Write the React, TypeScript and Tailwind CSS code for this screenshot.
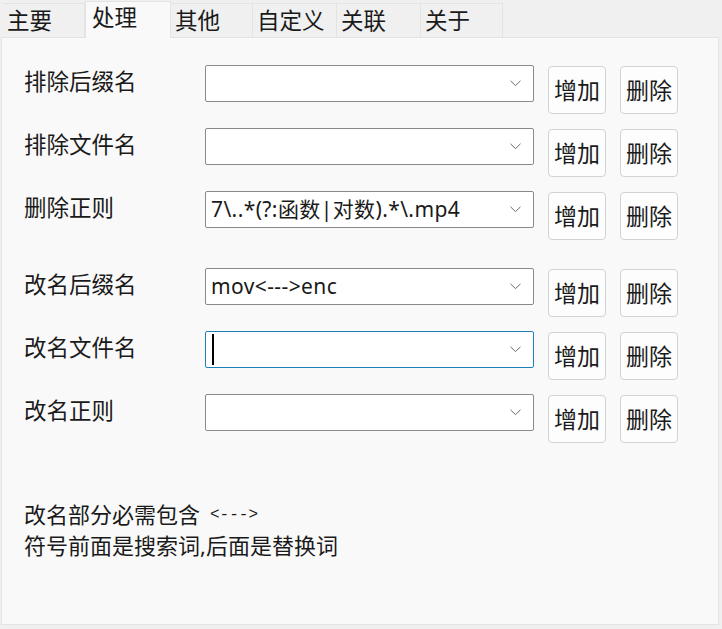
import React from 'react';

// --- Data ---

interface RowData {
    label: string;
    value: string;
    focused?: boolean;
}

const tabs = [
    { name: '主要', w: 'w-[82px]' },
    { name: '处理', w: 'w-[86px]', active: true },
    { name: '其他', w: 'w-[82px]' },
    { name: '自定义', w: 'w-[84px]' },
    { name: '关联', w: 'w-[84px]' },
    { name: '关于', w: 'w-[82px]' },
];

const groupA: RowData[] = [
    { label: '排除后缀名', value: '' },
    { label: '排除文件名', value: '' },
    { label: '删除正则', value: '7\\..*(?:函数|对数).*\\.mp4' },
];

const groupB: RowData[] = [
    { label: '改名后缀名', value: 'mov<--->enc' },
    { label: '改名文件名', value: '', focused: true },
    { label: '改名正则', value: '' },
];

const font = { fontFamily: '"Noto Sans", "Noto Sans CJK SC", sans-serif' };

// --- Pieces ---

const Chevron = () => (
    <svg width="11" height="7" viewBox="0 0 11 7" className="shrink-0">
        <polyline points="0.5,0.8 5.5,5.6 10.5,0.8" fill="none" stroke="#6b6b6b" strokeWidth="1" />
    </svg>
);

const Combo = ({ value, focused }: { value: string; focused?: boolean }) => (
    <div
        className={
            'flex h-[37px] w-[329px] items-center rounded-[2px] border bg-white pl-[5px] pr-[12px] ' +
            (focused ? 'border-[#1f7fb8]' : 'border-[#8a8a8a]')
        }
    >
        <div className="flex flex-1 items-center text-[21px] leading-none tracking-[0.4px] text-[#1a1a1a]">
            {focused && <span className="ml-[1px] h-[31px] w-[1.5px] bg-black" />}
            {value}
        </div>
        <Chevron />
    </div>
);

const Btn = ({ text }: { text: string }) => (
    <button className="mt-[1px] flex h-[48px] w-[58px] items-center justify-center rounded-[4px] border border-[#d3d3d3] bg-[#fdfdfd] text-[23px] text-[#1a1a1a]">
        {text}
    </button>
);

const Row = ({ row }: { row: RowData }) => (
    <div className="flex items-start">
        <div className="w-[181px] text-[22.5px] leading-[33px] text-[#1a1a1a]">{row.label}</div>
        <Combo value={row.value} focused={row.focused} />
        <div className="ml-[14px] flex gap-[14px]">
            <Btn text="增加" />
            <Btn text="删除" />
        </div>
    </div>
);

// --- Main ---

export default function App() {
    return (
        <div className="flex h-[629px] w-[722px] flex-col bg-[#f0f0f0]" style={font}>
            <div className="flex h-[37px] items-end pl-[3px]">
                {tabs.map((t) =>
                    t.active ? (
                        <div
                            key={t.name}
                            className={'relative z-10 -mb-px h-[37px] border-x border-t border-[#e3e3e3] bg-[#f9f9f9] pl-[6px] pt-[1px] text-[22.5px] leading-[30px] text-[#1a1a1a] ' + t.w}
                        >
                            {t.name}
                        </div>
                    ) : (
                        <div
                            key={t.name}
                            className={'h-[34px] border-r border-t border-[#e3e3e3] bg-[#f0f0f0] pl-[4px] pt-[2px] text-[22.5px] leading-[30px] text-[#1a1a1a] ' + t.w}
                        >
                            {t.name}
                        </div>
                    )
                )}
            </div>
            <div className="ml-[1px] mr-[3px] h-[588px] border border-[#e3e3e3] bg-[#f9f9f9] pl-[22px] pt-[27px]">
                <div className="flex flex-col gap-[14px]">
                    {groupA.map((r) => (
                        <Row key={r.label} row={r} />
                    ))}
                </div>
                <div className="mt-[28px] flex flex-col gap-[14px]">
                    {groupB.map((r) => (
                        <Row key={r.label} row={r} />
                    ))}
                </div>
                <div className="mt-[56px] text-[22px] text-[#1a1a1a]">
                    <div className="flex h-[31px] items-center leading-[31px]">
                        改名部分必需包含
                        <span className="ml-[10px] text-[16px] leading-none" style={{ fontFamily: '"Liberation Mono", monospace' }}>
                            &lt;---&gt;
                        </span>
                    </div>
                    <div className="h-[31px] leading-[31px]">符号前面是搜索词,后面是替换词</div>
                </div>
            </div>
        </div>
    );
}
